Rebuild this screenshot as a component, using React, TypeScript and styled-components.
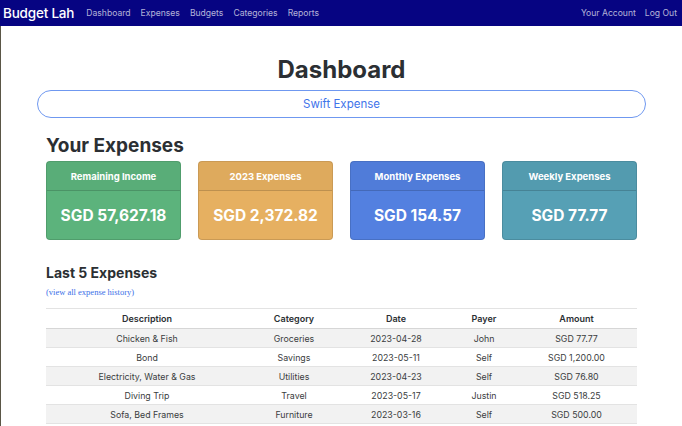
import React from "react";
import styled, { createGlobalStyle } from "styled-components";

const Global = createGlobalStyle`
  html, body { margin: 0; padding: 0; background: #fff; }
  body { font-family: Inter, "Noto Sans", sans-serif; color: #212529; }
  * { box-sizing: border-box; }
`;

const Page = styled.div`
  min-height: 426px;
  display: flex;
  flex-direction: column;
`;

const NavBar = styled.nav`
  height: 26px;
  background: #060482;
  display: flex;
  align-items: center;
  padding: 0 5px 0 3px;
`;

const Brand = styled.span`
  color: #fff;
  font-size: 13.5px;
  font-weight: 500;
  margin-right: 12px;
  letter-spacing: -0.2px;
`;

const NavLinks = styled.div`
  display: flex;
  gap: 10px;
  flex: 1;
`;

const NavRight = styled.div`
  display: flex;
  gap: 9px;
`;

const NavLink = styled.a`
  color: rgba(255, 255, 255, 0.7);
  font-size: 8.6px;
  text-decoration: none;
`;

const Main = styled.main`
  flex: 1;
  border-left: 1px solid #5a5646;
  padding-bottom: 20px;
`;

const Title = styled.h1`
  margin: 30px 0 0;
  text-align: center;
  font-size: 24px;
  font-weight: 700;
  color: #2b2f33;
  line-height: 28px;
`;

const ButtonRow = styled.div`
  padding: 0 36px;
  margin-top: 6px;
`;

const SwiftButton = styled.button`
  width: 100%;
  height: 28px;
  border: 1px solid #6f98f0;
  border-radius: 14px;
  background: #fff;
  color: #3f74ea;
  font-family: Inter, sans-serif;
  font-size: 11.5px;
`;

const Container = styled.div`
  padding: 0 45px;
`;

const SectionTitle = styled.h2`
  margin: 16px 0 3px;
  font-size: 19px;
  font-weight: 700;
  color: #2b2f33;
  line-height: 24px;
`;

const Cards = styled.div`
  display: grid;
  grid-template-columns: repeat(4, 135px);
  gap: 17px;
`;

const Card = styled.div<{ $bg: string }>`
  background: ${(p) => p.$bg};
  border: 1px solid rgba(0, 0, 0, 0.12);
  border-radius: 4px;
  height: 79px;
  display: flex;
  flex-direction: column;
  color: #fff;
`;

const CardHeader = styled.div`
  height: 29px;
  display: flex;
  align-items: center;
  justify-content: center;
  border-bottom: 1px solid rgba(0, 0, 0, 0.15);
  background: rgba(0, 0, 0, 0.03);
  font-size: 9.5px;
  font-weight: 700;
`;

const CardValue = styled.div`
  flex: 1;
  display: flex;
  align-items: center;
  justify-content: center;
  font-size: 15.5px;
  font-weight: 700;
`;

const SubTitle = styled.h3`
  margin: 24px 0 0;
  font-size: 14px;
  font-weight: 700;
  color: #2b2f33;
  line-height: 18px;
`;

const HistoryLink = styled.a`
  display: block;
  margin-top: 5px;
  font-family: "Liberation Serif", serif;
  font-size: 8.5px;
  color: #3b6fe8;
  text-decoration: none;
`;

const Table = styled.table`
  margin-top: 11px;
  width: 591px;
  border-collapse: collapse;
  table-layout: fixed;
  font-size: 8.8px;
  color: #2b2f33;
`;

const Th = styled.th<{ $w: number }>`
  width: ${(p) => p.$w}px;
  height: 20px;
  font-weight: 600;
  font-size: 9px;
  text-align: center;
  border-top: 1px solid #e3e3e3;
  border-bottom: 1px solid #d6d6d6;
`;

const Tr = styled.tr`
  &:nth-child(odd) { background: #f2f2f2; }
`;

const Td = styled.td`
  height: 19px;
  text-align: center;
  border-bottom: 1px solid #e3e3e3;
  color: #3a3d40;
`;

const cards = [
  { title: "Remaining Income", value: "SGD 57,627.18", bg: "#5cb37c" },
  { title: "2023 Expenses", value: "SGD 2,372.82", bg: "#e6b061" },
  { title: "Monthly Expenses", value: "SGD 154.57", bg: "#5380e0" },
  { title: "Weekly Expenses", value: "SGD 77.77", bg: "#56a0b5" },
];

const cols = [
  { h: "Description", w: 202 },
  { h: "Category", w: 92 },
  { h: "Date", w: 112 },
  { h: "Payer", w: 64 },
  { h: "Amount", w: 121 },
];

const rows = [
  ["Chicken & Fish", "Groceries", "2023-04-28", "John", "SGD 77.77"],
  ["Bond", "Savings", "2023-05-11", "Self", "SGD 1,200.00"],
  ["Electricity, Water & Gas", "Utilities", "2023-04-23", "Self", "SGD 76.80"],
  ["Diving Trip", "Travel", "2023-05-17", "Justin", "SGD 518.25"],
  ["Sofa, Bed Frames", "Furniture", "2023-03-16", "Self", "SGD 500.00"],
];

export default function App() {
  return (
    <Page>
      <Global />
      <NavBar>
        <Brand>Budget Lah</Brand>
        <NavLinks>
          <NavLink>Dashboard</NavLink>
          <NavLink>Expenses</NavLink>
          <NavLink>Budgets</NavLink>
          <NavLink>Categories</NavLink>
          <NavLink>Reports</NavLink>
        </NavLinks>
        <NavRight>
          <NavLink>Your Account</NavLink>
          <NavLink>Log Out</NavLink>
        </NavRight>
      </NavBar>
      <Main>
        <Title>Dashboard</Title>
        <ButtonRow>
          <SwiftButton>Swift Expense</SwiftButton>
        </ButtonRow>
        <Container>
          <SectionTitle>Your Expenses</SectionTitle>
          <Cards>
            {cards.map((c) => (
              <Card key={c.title} $bg={c.bg}>
                <CardHeader>{c.title}</CardHeader>
                <CardValue>{c.value}</CardValue>
              </Card>
            ))}
          </Cards>
          <SubTitle>Last 5 Expenses</SubTitle>
          <HistoryLink>(view all expense history)</HistoryLink>
          <Table>
            <thead>
              <tr>
                {cols.map((c) => (
                  <Th key={c.h} $w={c.w}>{c.h}</Th>
                ))}
              </tr>
            </thead>
            <tbody>
              {rows.map((r) => (
                <Tr key={r[0]}>
                  {r.map((v, i) => (
                    <Td key={i}>{v}</Td>
                  ))}
                </Tr>
              ))}
            </tbody>
          </Table>
        </Container>
      </Main>
    </Page>
  );
}
